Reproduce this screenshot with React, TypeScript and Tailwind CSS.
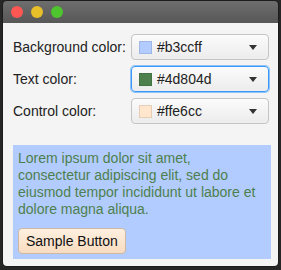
const rows = [
  { label: "Background color:", value: "#b3ccff", swatch: "bg-[#b3ccff]", focused: false },
  { label: "Text color:", value: "#4d804d", swatch: "bg-[#4d804d]", focused: true },
  { label: "Control color:", value: "#ffe6cc", swatch: "bg-[#ffe6cc]", focused: false },
]

function ColorPicker({ value, swatch, focused }: { value: string; swatch: string; focused: boolean }) {
  return (
    <div
      className={`flex h-[26px] w-[138px] items-center rounded-[4px] border bg-gradient-to-b from-[#fbfbfb] to-[#ececec] pl-[7px] pr-[11px] ${
        focused ? "border-[#3b99fc] shadow-[0_0_0_1px_#8fc2f6]" : "border-[#c5c5c5]"
      }`}
    >
      <span className={`h-[13px] w-[13px] border border-black/10 ${swatch}`} />
      <span className="ml-[5px] flex-1 text-[14px] text-[#222]">{value}</span>
      <svg width="8" height="5" viewBox="0 0 8 5">
        <path d="M0 0h8L4 5z" fill="#333" />
      </svg>
    </div>
  )
}

export default function App() {
  return (
    <div className="h-[270px] w-[281px] bg-[#262626] px-[2px] font-['Liberation_Sans',Arial,sans-serif]">
      <div className="flex h-[267px] flex-col overflow-hidden rounded-[5px] border border-[#1c1c1c]">
        <div className="flex h-[22px] items-center gap-[8px] bg-gradient-to-b from-[#6e6e6e] to-[#575757] pl-[8px]">
          <span className="h-[12px] w-[12px] rounded-full bg-[#fc5753]" />
          <span className="h-[12px] w-[12px] rounded-full bg-[#e6bf29]" />
          <span className="h-[12px] w-[12px] rounded-full bg-[#4ec42e]" />
        </div>
        <div className="flex flex-1 flex-col bg-[#f4f4f4] pl-[10px] pr-[7px] pt-[11px]">
          <div className="flex flex-col gap-[6px]">
            {rows.map((r) => (
              <div key={r.label} className="flex items-center">
                <span className="w-[118px] text-[14px] text-[#222]">{r.label}</span>
                <ColorPicker value={r.value} swatch={r.swatch} focused={r.focused} />
              </div>
            ))}
          </div>
          <div className="mt-[21px] bg-[#b3ccff] px-[5px] pb-[5px] pt-[5px]">
            <p className="text-[14px] leading-[17px] text-[#4d804d]">
              Lorem ipsum dolor sit amet, consectetur adipiscing elit, sed do eiusmod tempor incididunt ut labore et
              dolore magna aliqua.
            </p>
            <button className="mt-[10px] h-[26px] rounded-[4px] border border-[#cdb9a3] bg-gradient-to-b from-[#fff0e0] to-[#f7dcc0] px-[7px] text-[14px] text-[#111]">
              Sample Button
            </button>
          </div>
        </div>
      </div>
    </div>
  )
}
